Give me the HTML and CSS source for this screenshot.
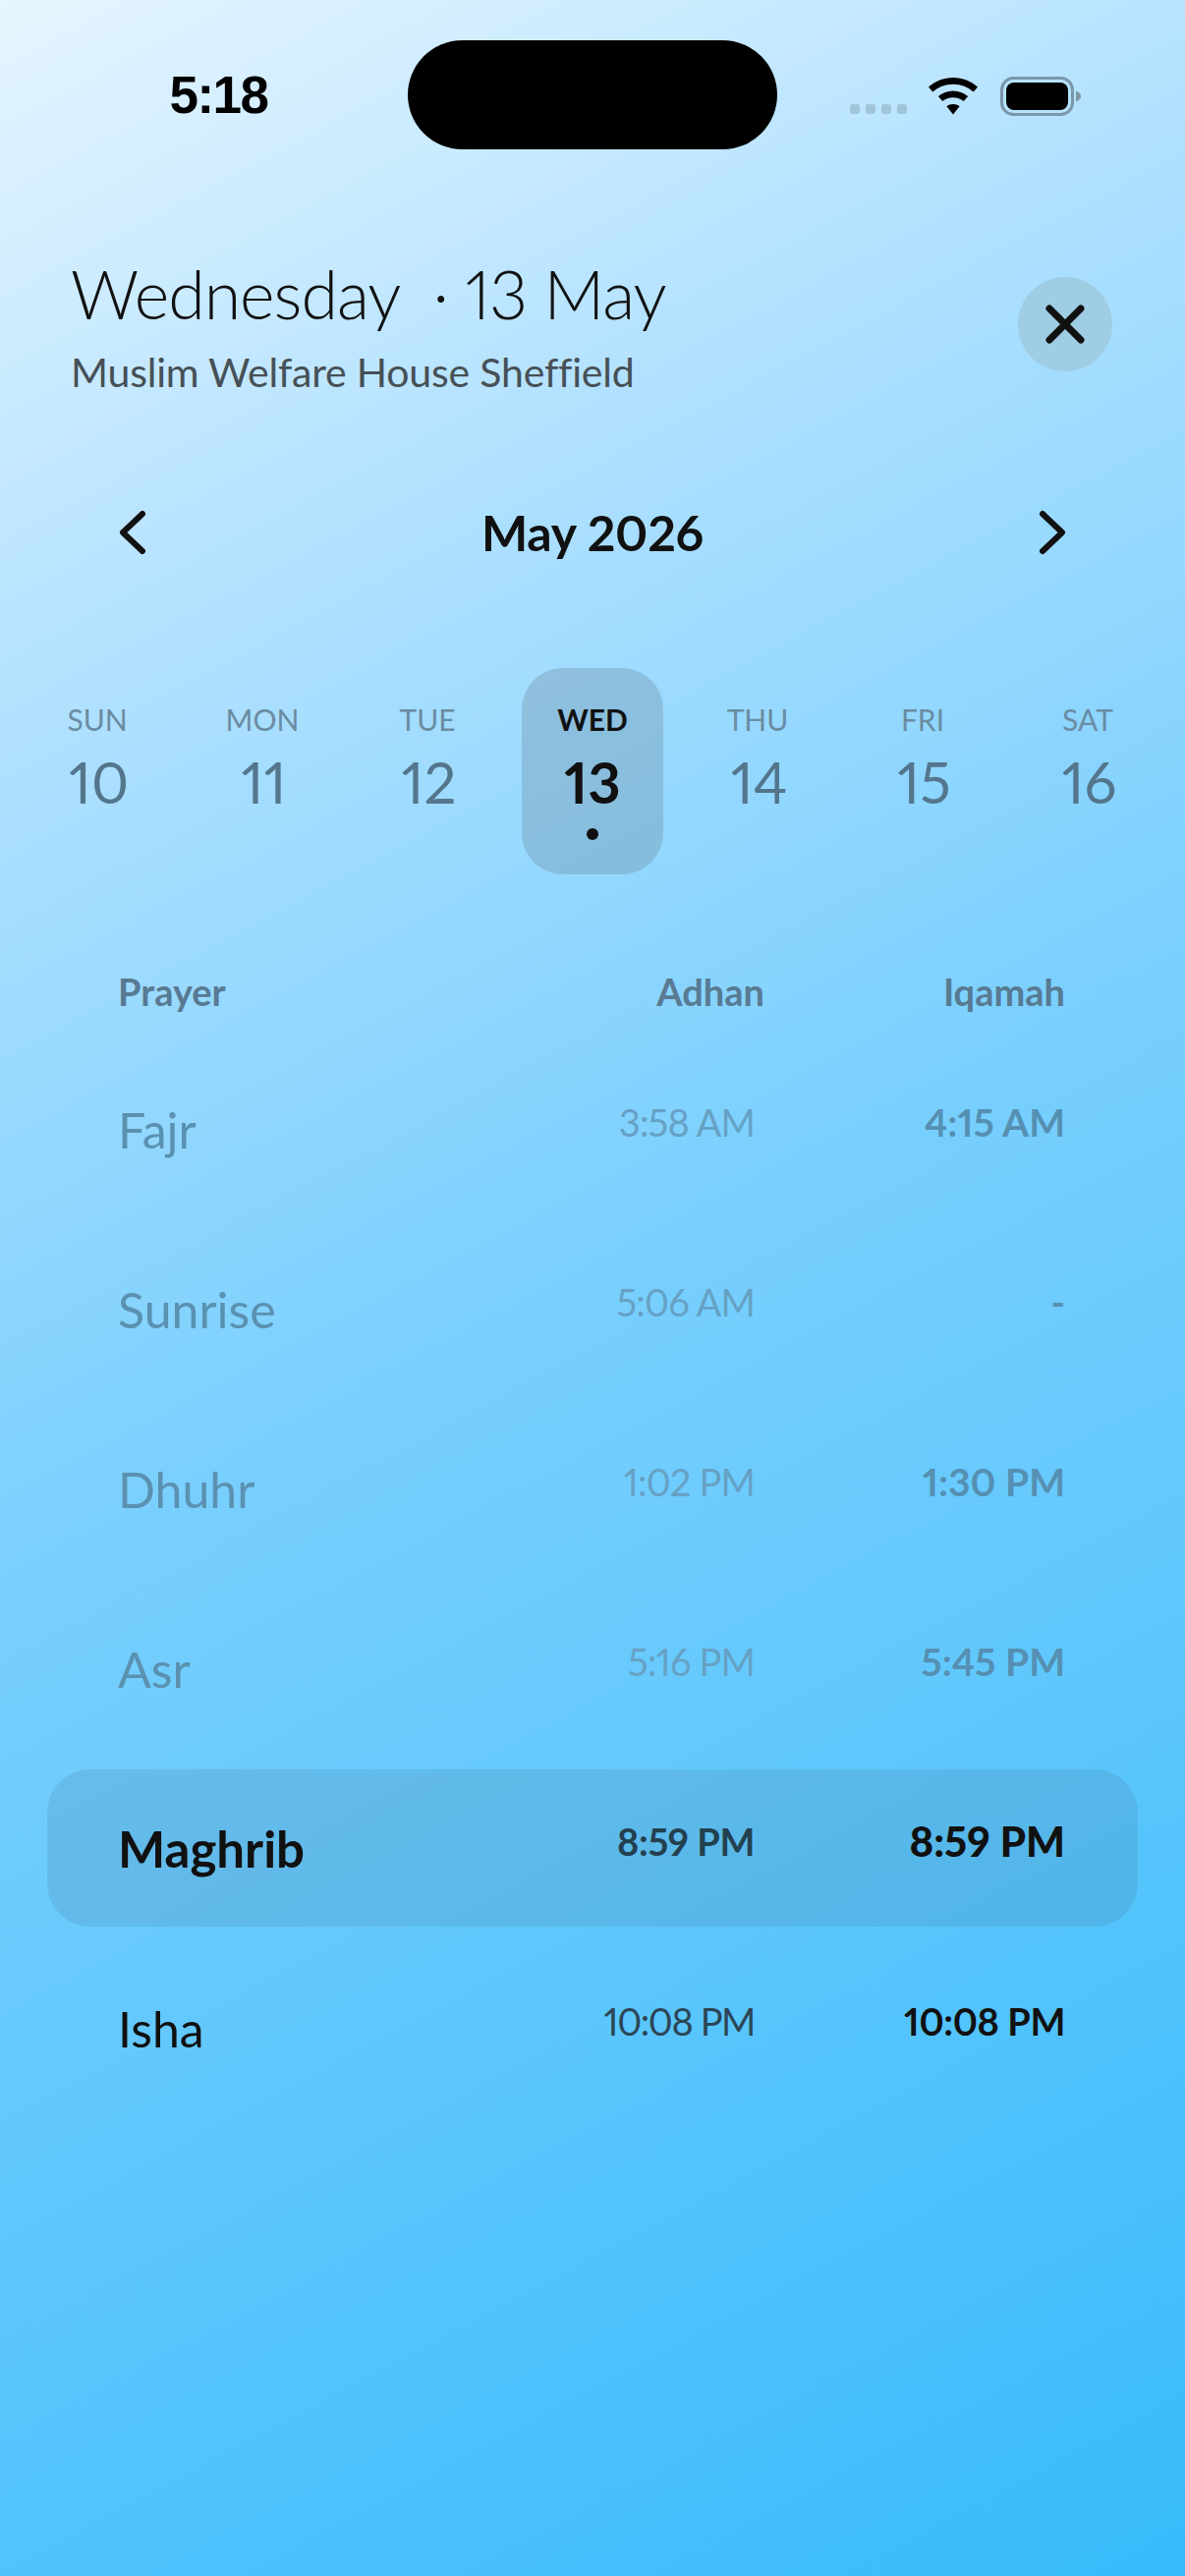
FILE: index.html
```html
<!DOCTYPE html>
<html lang="en">
<head>
<meta charset="utf-8">
<title>Prayer times</title>
<link rel="stylesheet" href="styles.css">
</head>
<body>
<main class="screen">
  <div class="status">
    <div class="time">5:18</div>
    <div class="island"></div>
    <div class="indicators">
      <div class="signal"><i></i><i></i><i></i><i></i></div>
      <svg class="wifi" width="52" height="38" viewBox="0 0 52 38"><path d="M26 0C16.5 0 7.6 3.6 1 9.6L5.2 14.6C10.7 9.7 18 6.7 26 6.7S41.300 9.700 46.800 14.600L51 9.600C44.400 3.600 35.500 0 26 0Z"/><path d="M26 13.500C20.300 13.500 15 15.600 10.900 19.100L15.200 24.100C18.100 21.700 21.900 20.200 26 20.200S33.900 21.700 36.800 24.100L41.100 19.100C37 15.600 31.700 13.500 26 13.500Z"/><path d="M26 27C23.500 27 21.200 27.900 19.400 29.300L26 37.500L32.600 29.300C30.800 27.900 28.500 27 26 27Z"/></svg>
      <svg class="battery" width="83" height="40" viewBox="0 0 83 40"><rect x="1.500" y="1.500" width="72" height="37" rx="12" fill="none" stroke="#7b97a9" stroke-width="3"/><rect x="6" y="6" width="63" height="28" rx="8"/><path d="M77 14.500C80 15.500 82 17.500 82 20S80 24.500 77 25.500Z" fill="#7b97a9"/></svg>
    </div>
  </div>

  <header class="head">
    <div>
      <h1 class="title">Wednesday &nbsp;· 13 May</h1>
      <p class="place">Muslim Welfare House Sheffield</p>
    </div>
    <button class="close" aria-label="Close">
      <svg width="44" height="44" viewBox="0 0 44 44"><path d="M6 6L38 38M38 6L6 38" fill="none" stroke="#111" stroke-width="7" stroke-linecap="round"/></svg>
    </button>
  </header>

  <div class="month">
    <svg class="chev" width="30" height="46" viewBox="0 0 30 46"><path d="M25 4L5 23L25 42" fill="none" stroke="#111" stroke-width="6" stroke-linecap="round" stroke-linejoin="round"/></svg>
    <div class="month-name">May 2026</div>
    <svg class="chev" width="30" height="46" viewBox="0 0 30 46"><path d="M5 4L25 23L5 42" fill="none" stroke="#111" stroke-width="6" stroke-linecap="round" stroke-linejoin="round"/></svg>
  </div>

  <div class="days">
    <div class="day"><span class="dow">SUN</span><span class="num">10</span></div>
    <div class="day"><span class="dow">MON</span><span class="num">11</span></div>
    <div class="day"><span class="dow">TUE</span><span class="num">12</span></div>
    <div class="day today"><span class="dow">WED</span><span class="num">13</span><span class="dot"></span></div>
    <div class="day"><span class="dow">THU</span><span class="num">14</span></div>
    <div class="day"><span class="dow">FRI</span><span class="num">15</span></div>
    <div class="day"><span class="dow">SAT</span><span class="num">16</span></div>
  </div>

  <div class="cols">
    <span class="col-name">Prayer</span>
    <span class="col-adhan">Adhan</span>
    <span class="col-iqamah">Iqamah</span>
  </div>

  <div class="rows">
    <div class="row past"><span class="name">Fajr</span><span class="adhan">3:58 AM</span><span class="iqamah">4:15 AM</span></div>
    <div class="row past"><span class="name">Sunrise</span><span class="adhan">5:06 AM</span><span class="iqamah">-</span></div>
    <div class="row past"><span class="name">Dhuhr</span><span class="adhan">1:02 PM</span><span class="iqamah">1:30 PM</span></div>
    <div class="row past"><span class="name">Asr</span><span class="adhan">5:16 PM</span><span class="iqamah">5:45 PM</span></div>
    <div class="row current"><span class="name">Maghrib</span><span class="adhan">8:59 PM</span><span class="iqamah">8:59 PM</span></div>
    <div class="row upcoming"><span class="name">Isha</span><span class="adhan">10:08 PM</span><span class="iqamah">10:08 PM</span></div>
  </div>
</main>
</body>
</html>
```

FILE: styles.css
```css
* { box-sizing: border-box; }
html, body { margin: 0; padding: 0; }
body { width: 1206px; height: 2622px; overflow: hidden; font-family: "Lato", "Liberation Sans", sans-serif; font-variant-numeric: proportional-nums; color: #111; }
.screen { width: 1206px; height: 2622px; display: flex; flex-direction: column; background: linear-gradient(152deg, #e6f5ff 0%, #aee0ff 24%, #78cffe 50%, #58c5fc 75%, #38bbfb 100%); }

.status { display: grid; grid-template-columns: 415px 376px 1fr; height: 111px; margin-top: 41px; flex: none; }
.time { font-family: "Liberation Sans", sans-serif; font-weight: 700; font-size: 53px; line-height: 111px; height: 111px; text-align: center; padding-left: 30px; color: #000; letter-spacing: -1.5px; }
.island { background: #000; border-radius: 56px; }
.indicators { display: flex; align-items: flex-start; padding: 37px 0 0 74px; }
.signal { display: flex; gap: 6px; margin-top: 28px; }
.signal i { width: 10px; height: 10px; border-radius: 3px; background: #a0c4d8; }
.wifi { margin-left: 21px; margin-top: 1px; }
.battery { margin-left: 22px; }

.head { display: flex; justify-content: space-between; align-items: flex-start; padding: 107px 74px 0 72px; flex: none; }
.title { margin: 0; font-weight: 300; font-size: 68px; line-height: 80px; letter-spacing: -1px; white-space: nowrap; color: #111; }
.place { margin: 15px 0 0 0; font-size: 41px; line-height: 50px; color: #465056; white-space: nowrap; letter-spacing: -0.2px; }
.close { margin-top: 23px; width: 96px; height: 96px; border: 0; padding: 0; border-radius: 50%; background: #9fcde4; display: flex; align-items: center; justify-content: center; }

.month { display: flex; justify-content: space-between; align-items: center; margin-top: 108px; padding: 0 120px; height: 60px; flex: none; }
.month-name { font-weight: 700; font-size: 50px; line-height: 60px; color: #111; letter-spacing: -0.2px; }

.days { display: grid; grid-template-columns: repeat(7, 168px); justify-content: center; margin-top: 108px; height: 210px; flex: none; }
.day { display: flex; flex-direction: column; align-items: center; padding-top: 34px; width: 144px; justify-self: center; border-radius: 42px; color: #5d7d92; }
.dow { font-size: 30px; line-height: 36px; color: #6a8ca2; }
.num { font-size: 58px; line-height: 70px; margin-top: 11px; color: #54768d; font-weight: 400; padding-left: 3px; }
.today { background: rgba(110, 140, 160, 0.35); }
.today .dow { color: #111; font-weight: 700; }
.today .num { color: #111; font-weight: 700; padding-left: 0; }
.dot { width: 12px; height: 12px; border-radius: 50%; background: #111; margin-top: 12px; }

.cols { display: grid; grid-template-columns: 1fr 220px 306px; padding: 0 122px 0 120px; margin-top: 97px; height: 44px; font-size: 38px; line-height: 44px; font-weight: 700; color: #587a92; flex: none; }
.col-adhan, .col-iqamah { text-align: right; }

.rows { display: flex; flex-direction: column; gap: 23px; margin: 38px 48px 0; flex: none; }
.row { display: grid; grid-template-columns: 1fr 220px 316px; align-items: center; height: 160px; padding: 0 74px 0 72px; border-radius: 44px; }
.name { font-size: 50px; line-height: 60px; color: #111; position: relative; top: 1px; }
.adhan, .iqamah { text-align: right; font-size: 38px; line-height: 46px; position: relative; top: -7px; }
.adhan { color: #2c4656; letter-spacing: -0.8px; }
.iqamah { color: #111; font-weight: 700; letter-spacing: 0; font-size: 39px; }
.past .name { color: #5b91b0; }
.past .adhan { color: #66a1c4; }
.past .iqamah { color: #5590b2; }
.current { background: rgba(75, 130, 170, 0.22); }
.current .name { font-weight: 700; font-size: 51px; }
.current .adhan { font-weight: 700; color: #23404f; letter-spacing: -0.4px; }
.current .iqamah { font-size: 42px; font-weight: 900; }
.upcoming .adhan { letter-spacing: -1.4px; }
.upcoming .iqamah { font-size: 38px; letter-spacing: -0.4px; }
```
